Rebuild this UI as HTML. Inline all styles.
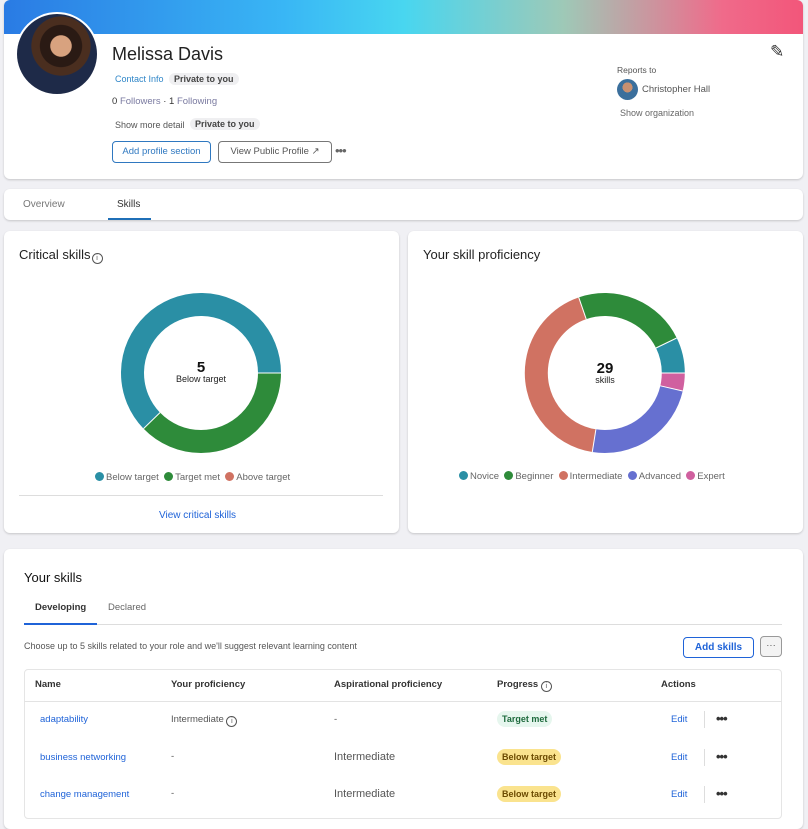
<!DOCTYPE html>
<html><head><meta charset="utf-8"><style>
*{box-sizing:border-box;margin:0;padding:0}
body{width:808px;height:812px;overflow:hidden;background:#f0f0f4;font-family:"Liberation Sans",sans-serif;color:#333;position:relative}
.card{position:absolute;background:#fff;border-radius:6px;box-shadow:0 1px 2px rgba(0,0,0,.18)}
.abs{position:absolute;white-space:nowrap}
.pill{background:#efeff1;border-radius:9px;padding:1px 5px;font-weight:bold;font-size:9px;color:#444}
.btn{position:absolute;border-radius:4px;font-size:9.5px;text-align:center}
.dot{display:inline-block;width:9px;height:9px;border-radius:50%;vertical-align:-1px;margin-right:2px}
.lg{font-size:9.5px;color:#666}
.th{position:absolute;top:679px;font-size:9.5px;font-weight:bold;color:#333}
.td{position:absolute;font-size:9.5px}
.badge{position:absolute;font-size:9px;font-weight:bold;padding:3px 5px;border-radius:9px}
.info{display:inline-block;width:11px;height:11px;border:1px solid #555;border-radius:50%;font-size:7px;text-align:center;line-height:9px;color:#555;vertical-align:-1px}
.dots{position:absolute;font-size:13px;font-weight:bold;color:#333;letter-spacing:-1px}
</style></head><body>
<div class="card" style="left:4px;top:0;width:799px;height:179px;overflow:hidden">
 <div style="position:absolute;left:0;top:0;width:100%;height:34px;background:linear-gradient(90deg,#2a7be4 0%,#39b6f5 35%,#48d6f0 50%,#9ec9b7 70%,#f06a8a 90%,#f2567a 100%)"></div>
</div>
<div class="abs" style="left:15px;top:12px;width:84px;height:84px;border-radius:50%;background:#fff"></div>
<div class="abs" style="left:17px;top:14px;width:80px;height:80px;border-radius:50%;background:radial-gradient(circle at 55% 40%,#d8a27f 0 16%,#2a1a14 17% 32%,#4a2e1f 33% 45%,#1e2a48 46% 100%)"></div>
<div class="abs" style="left:112px;top:44px;font-size:18px;color:#222">Melissa Davis</div>
<div class="abs" style="left:115px;top:74px;font-size:9px;color:#2f86c8">Contact Info</div>
<div class="abs pill" style="left:169px;top:73px">Private to you</div>
<div class="abs" style="left:112px;top:96px;font-size:9.5px;color:#333">0 <span style="color:#7a7aa0">Followers</span> · 1 <span style="color:#7a7aa0">Following</span></div>
<div class="abs" style="left:115px;top:120px;font-size:9px;color:#555">Show more detail</div>
<div class="abs pill" style="left:190px;top:118px">Private to you</div>
<div class="btn" style="left:112px;top:141px;width:99px;height:22px;border:1px solid #2f78c0;color:#2f78c0;line-height:20px">Add profile section</div>
<div class="btn" style="left:218px;top:141px;width:114px;height:22px;border:1px solid #777;color:#555;line-height:20px">View Public Profile ↗</div>
<div class="abs" style="left:335px;top:143px;font-size:13px;color:#666;letter-spacing:-1px">•••</div>
<div class="abs" style="left:770px;top:42px;font-size:17px;color:#333">✎</div>
<div class="abs" style="left:617px;top:65px;font-size:8.5px;color:#555">Reports to</div>
<div class="abs" style="left:617px;top:79px;width:21px;height:21px;border-radius:50%;background:radial-gradient(circle at 50% 40%,#c89070 0 30%,#3b6f9c 31%)"></div>
<div class="abs" style="left:642px;top:84px;font-size:9.5px;color:#555">Christopher Hall</div>
<div class="abs" style="left:620px;top:108px;font-size:9px;color:#666">Show organization</div>

<div class="card" style="left:4px;top:189px;width:799px;height:31px"></div>
<div class="abs" style="left:23px;top:199px;font-size:10px;color:#777">Overview</div>
<div class="abs" style="left:117px;top:199px;font-size:10px;color:#333">Skills</div>
<div class="abs" style="left:108px;top:218px;width:43px;height:2px;background:#1f6fb7"></div>

<div class="card" style="left:4px;top:231px;width:395px;height:302px"></div>
<div class="card" style="left:408px;top:231px;width:395px;height:302px"></div>
<div class="abs" style="left:19px;top:247px;font-size:13px;color:#222">Critical skills<span class="info" style="margin-left:1px">i</span></div>
<svg class="abs" style="left:0;top:0;z-index:1" width="808" height="812">
 <g fill="none" stroke-width="23">
  <circle cx="201" cy="373" r="68.5" stroke="#2a8fa5" stroke-dasharray="267.8 1000" transform="rotate(136 201 373)"/>
  <circle cx="201" cy="373" r="68.5" stroke="#2e8b3a" stroke-dasharray="162.6 1000"/>
  <circle cx="604.8" cy="373" r="68.5" stroke="#2e8b3a" stroke-dasharray="99.2 1000" transform="rotate(251 604.8 373)"/>
  <circle cx="604.8" cy="373" r="68.5" stroke="#2a8fa5" stroke-dasharray="31.1 1000" transform="rotate(334 604.8 373)"/>
  <circle cx="604.8" cy="373" r="68.5" stroke="#d0609f" stroke-dasharray="15.5 1000"/>
  <circle cx="604.8" cy="373" r="68.5" stroke="#6670d0" stroke-dasharray="102.8 1000" transform="rotate(13 604.8 373)"/>
  <circle cx="604.8" cy="373" r="68.5" stroke="#d07262" stroke-dasharray="181.7 1000" transform="rotate(99 604.8 373)"/>
 </g>
 <g stroke="#fff" stroke-width="1">
  <line x1="258" y1="373" x2="282" y2="373"/><line x1="160" y1="412.6" x2="143.5" y2="428.6"/>
  <line x1="586.2" y1="319.1" x2="578.7" y2="297.3"/><line x1="656" y1="348" x2="676.7" y2="338"/><line x1="661" y1="373" x2="685" y2="373"/><line x1="660.3" y1="385.8" x2="682.7" y2="391"/><line x1="595.9" y1="429.3" x2="592.3" y2="452"/>
 </g>
 <text x="201" y="372" text-anchor="middle" font-family="Liberation Sans" font-weight="bold" font-size="15" fill="#111">5</text>
 <text x="201" y="382" text-anchor="middle" font-family="Liberation Sans" font-size="9" fill="#222">Below target</text>
 <text x="605" y="373" text-anchor="middle" font-family="Liberation Sans" font-weight="bold" font-size="15" fill="#111">29</text>
 <text x="605" y="383" text-anchor="middle" font-family="Liberation Sans" font-size="9" fill="#222">skills</text>
</svg>
<div class="abs lg" style="left:95px;top:472px"><span class="dot" style="background:#2a8fa5"></span>Below target &nbsp;<span class="dot" style="background:#2e8b3a"></span>Target met &nbsp;<span class="dot" style="background:#d07262"></span>Above target</div>
<div class="abs" style="left:19px;top:495px;width:364px;height:1px;background:#ddd"></div>
<div class="abs" style="left:159px;top:510px;font-size:10px;color:#1f63d8">View critical skills</div>

<div class="abs" style="left:423px;top:247px;font-size:13px;color:#222">Your skill proficiency</div>
<div class="abs lg" style="left:459px;top:471px"><span class="dot" style="background:#2a8fa5"></span>Novice &nbsp;<span class="dot" style="background:#2e8b3a"></span>Beginner &nbsp;<span class="dot" style="background:#d07262"></span>Intermediate &nbsp;<span class="dot" style="background:#6670d0"></span>Advanced &nbsp;<span class="dot" style="background:#d0609f"></span>Expert</div>

<div class="card" style="left:4px;top:549px;width:799px;height:280px"></div>
<div class="abs" style="left:24px;top:570px;font-size:13px;color:#111">Your skills</div>
<div class="abs" style="left:35px;top:602px;font-size:9.5px;color:#333;font-weight:bold">Developing</div>
<div class="abs" style="left:108px;top:602px;font-size:9.5px;color:#666">Declared</div>
<div class="abs" style="left:24px;top:624px;width:758px;height:1px;background:#ddd"></div>
<div class="abs" style="left:24px;top:623px;width:73px;height:2px;background:#1f63d8"></div>
<div class="abs" style="left:24px;top:641px;font-size:9px;color:#555">Choose up to 5 skills related to your role and we'll suggest relevant learning content</div>
<div class="btn" style="left:683px;top:637px;width:71px;height:21px;border:1px solid #1f63d8;color:#1f63d8;font-weight:bold;line-height:19px;font-size:10px">Add skills</div>
<div class="btn" style="left:760px;top:636px;width:22px;height:21px;border:1px solid #999;background:#f3f3f3;line-height:17px;color:#555">···</div>
<div class="abs" style="left:24px;top:669px;width:758px;height:150px;border:1px solid #e5e5e5;border-radius:4px"></div>
<div class="abs" style="left:24px;top:701px;width:758px;height:1px;background:#e3e3e3"></div>
<div class="th" style="left:35px">Name</div>
<div class="th" style="left:171px">Your proficiency</div>
<div class="th" style="left:334px">Aspirational proficiency</div>
<div class="th" style="left:497px">Progress <span class="info" style="font-weight:normal">i</span></div>
<div class="th" style="left:661px">Actions</div>

<div class="td" style="left:40px;top:714px;color:#1f63d8">adaptability</div>
<div class="td" style="left:171px;top:714px;color:#555">Intermediate <span class="info">i</span></div>
<div class="td" style="left:334px;top:714px;color:#555">-</div>
<div class="badge" style="left:497px;top:711px;background:#e6f6ee;color:#1f6b3e">Target met</div>
<div class="td" style="left:671px;top:714px;color:#1f63d8">Edit</div>

<div class="td" style="left:40px;top:752px;color:#1f63d8">business networking</div>
<div class="td" style="left:171px;top:751px;color:#555">-</div>
<div class="td" style="left:334px;top:751px;color:#555;font-size:11px">Intermediate</div>
<div class="badge" style="left:497px;top:749px;background:#fae38e;color:#6b4a00">Below target</div>
<div class="td" style="left:671px;top:752px;color:#1f63d8">Edit</div>

<div class="td" style="left:40px;top:789px;color:#1f63d8">change management</div>
<div class="td" style="left:171px;top:788px;color:#555">-</div>
<div class="td" style="left:334px;top:788px;color:#555;font-size:11px">Intermediate</div>
<div class="badge" style="left:497px;top:786px;background:#fae38e;color:#6b4a00">Below target</div>
<div class="td" style="left:671px;top:789px;color:#1f63d8">Edit</div>

<div class="abs" style="left:704px;top:711px;width:1px;height:17px;background:#ddd"></div>
<div class="abs" style="left:704px;top:749px;width:1px;height:17px;background:#ddd"></div>
<div class="abs" style="left:704px;top:786px;width:1px;height:17px;background:#ddd"></div>
<div class="dots" style="left:716px;top:711px">•••</div>
<div class="dots" style="left:716px;top:749px">•••</div>
<div class="dots" style="left:716px;top:786px">•••</div>
</body></html>
